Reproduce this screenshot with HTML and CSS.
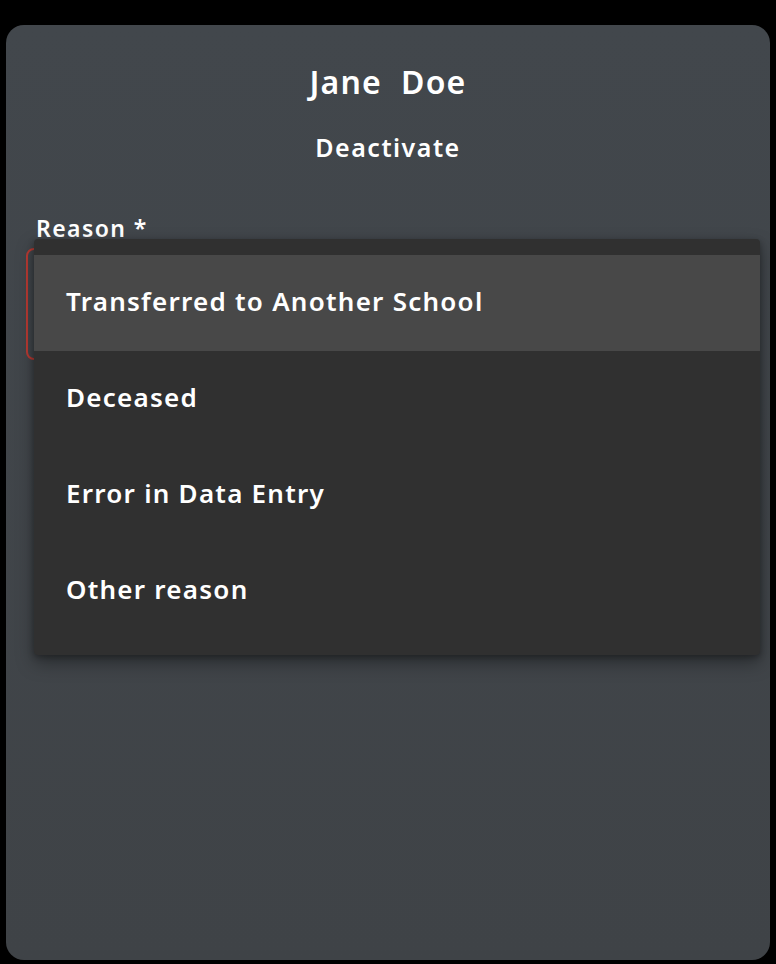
FILE: index.html
```html
<!DOCTYPE html>
<html>
<head>
<meta charset="utf-8">
<link rel="stylesheet" href="styles.css">
</head>
<body>
<div class="card">
  <h1 class="name">Jane&nbsp;&nbsp;Doe</h1>
  <h2 class="subtitle">Deactivate</h2>
  <div class="field">
    <label class="label">Reason *</label>
    <div class="select"></div>
    <ul class="menu">
      <li class="item active">Transferred to Another School</li>
      <li class="item">Deceased</li>
      <li class="item">Error in Data Entry</li>
      <li class="item">Other reason</li>
    </ul>
  </div>
</div>
</body>
</html>
```
FILE: styles.css
```css
html, body {
  margin: 0;
  padding: 0;
  background: #000;
  width: 776px;
  height: 964px;
  overflow: hidden;
  font-family: "Noto Sans", "Lato", sans-serif;
  color: #fff;
}
.card {
  box-sizing: border-box;
  margin: 25px 6px 0 6px;
  width: 764px;
  height: 935px;
  background: linear-gradient(#42474c, #3f4347);
  border-radius: 18px;
  padding-top: 37px;
}
.name {
  margin: 0;
  text-align: center;
  font-size: 32px;
  font-weight: 600;
  letter-spacing: 1.2px;
  line-height: 40px;
}
.subtitle {
  margin: 28px 0 0 0;
  text-align: center;
  font-size: 25px;
  font-weight: 600;
  letter-spacing: 1.5px;
  line-height: 34px;
}
.field {
  position: relative;
  margin: 50px 0 0 20px;
  width: 726px;
}
.label {
  display: block;
  margin-left: 10px;
  font-size: 23px;
  font-weight: 600;
  letter-spacing: 1.4px;
  line-height: 28px;
}
.select {
  margin-top: 6px;
  height: 108px;
  border: 2px solid #b83a33;
  border-radius: 8px;
}
.menu {
  position: absolute;
  left: 8px;
  top: 25px;
  width: 726px;
  margin: 0;
  padding: 16px 0;
  list-style: none;
  background: #303030;
  border-radius: 4px;
  box-shadow: 0 8px 18px rgba(0,0,0,0.35), 0 2px 6px rgba(0,0,0,0.3);
}
.item {
  height: 96px;
  display: flex;
  align-items: center;
  padding-left: 32px;
  padding-bottom: 4px;
  box-sizing: border-box;
  font-size: 26px;
  font-weight: 600;
  letter-spacing: 1.25px;
}
.item.active {
  background: #484848;
}
```
